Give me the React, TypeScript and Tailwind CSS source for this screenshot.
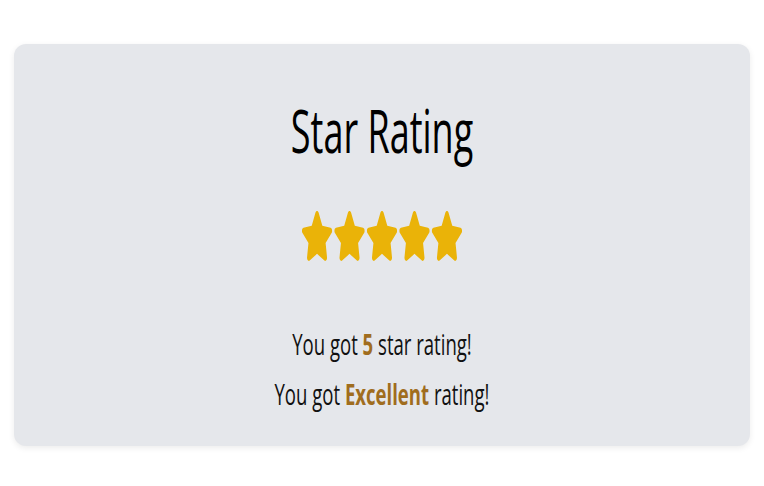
import { FaStar } from 'react-icons/fa'

export default function App() {
  const stars = [1, 2, 3, 4, 5]

  return (
    <div className="min-h-screen bg-white pt-[44px] px-[14px]" style={{ fontFamily: '"Open Sans", "Noto Sans", sans-serif' }}>
      {/* 카드 */}
      <div className="h-[402px] rounded-xl bg-gray-200 shadow-[0_2px_6px_rgba(0,0,0,0.08)] pt-[50px]">
        <div className="flex flex-col items-center">
          <h1 className="scale-x-[0.6] text-[60px] leading-[72px] font-normal text-black">Star Rating</h1>

          <div className="mt-[45px] flex scale-x-[0.58] text-[#eab308]">
            {stars.map((s) => (
              <FaStar key={s} className="h-[50px] w-[56px]" />
            ))}
          </div>

          <div className="mt-[58px] scale-x-[0.64] text-center text-[29px] leading-[50px] text-[#111]">
            <p>
              You got <span className="font-bold text-[#a06d1e]">5</span> star rating!
            </p>
            <p>
              You got <span className="font-bold text-[#a06d1e]">Excellent</span> rating!
            </p>
          </div>
        </div>
      </div>
    </div>
  )
}
